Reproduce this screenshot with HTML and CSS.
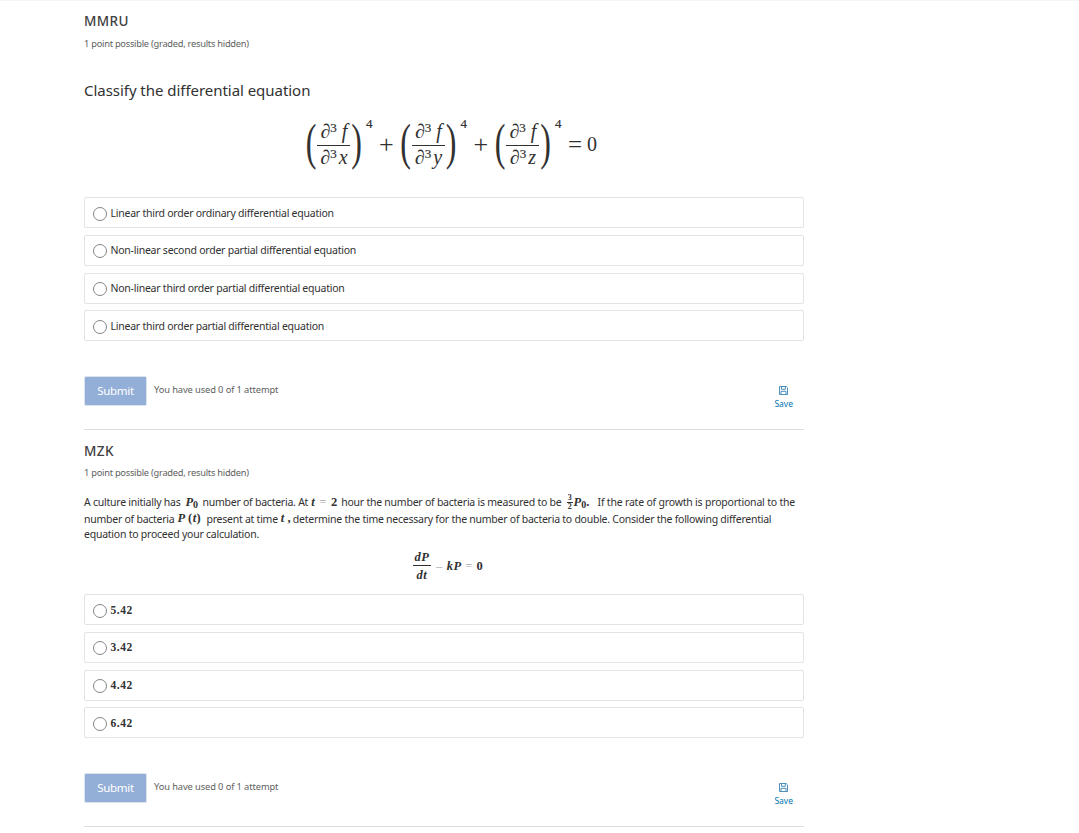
FILE: index.html
```html
<!DOCTYPE html>
<html lang="en">
<head>
    <meta charset="UTF-8">
    <meta name="viewport" content="width=device-width, initial-scale=1.0">
    <title>Differential Equations Quiz</title>
    <link rel="stylesheet" href="styles.css">
</head>
<body>
    <div class="problems">
        <section class="problem">
            <h3 class="problem-title">MMRU</h3>
            <div class="problem-progress">1 point possible (graded, results hidden)</div>
            <p class="question">Classify the differential equation</p>

            <div class="equation equation-large">
                <span class="paren">(</span>
                <span class="frac"><span class="num">∂<sup>3</sup><i class="f">f</i></span><span class="den">∂<sup>3</sup><i class="var">x</i></span></span>
                <span class="paren">)</span>
                <span class="power">4</span>
                <span class="plus">+</span>
                <span class="paren">(</span>
                <span class="frac"><span class="num">∂<sup>3</sup><i class="f">f</i></span><span class="den">∂<sup>3</sup><i class="var">y</i></span></span>
                <span class="paren">)</span>
                <span class="power">4</span>
                <span class="plus">+</span>
                <span class="paren">(</span>
                <span class="frac"><span class="num">∂<sup>3</sup><i class="f">f</i></span><span class="den">∂<sup>3</sup><i class="var">z</i></span></span>
                <span class="paren">)</span>
                <span class="power">4</span>
                <span class="equals">=</span>
                <span class="zero">0</span>
            </div>

            <div class="choices">
                <label class="choice"><input type="radio" name="mmru"><span class="choice-text">Linear third order ordinary differential equation</span></label>
                <label class="choice"><input type="radio" name="mmru"><span class="choice-text">Non-linear second order partial differential equation</span></label>
                <label class="choice"><input type="radio" name="mmru"><span class="choice-text">Non-linear third order partial differential equation</span></label>
                <label class="choice"><input type="radio" name="mmru"><span class="choice-text">Linear third order partial differential equation</span></label>
            </div>

            <div class="action">
                <button class="submit" type="button">Submit</button>
                <span class="attempts">You have used 0 of 1 attempt</span>
                <a class="save">
                    <svg class="save-icon" viewBox="0 0 9 9"><path d="M.5.5h6.7l1.3 1.3v6.7h-8zM2.5.5v2.8h3.8V.5M2 8.5V5.3h5v3.2"/></svg>
                    <span>Save</span>
                </a>
            </div>
        </section>

        <section class="problem">
            <h3 class="problem-title">MZK</h3>
            <div class="problem-progress">1 point possible (graded, results hidden)</div>
            <div class="passage">
                <div class="line line-1"><span>A culture initially has</span><span class="math p-zero"><i>P</i><sub>0</sub></span><span>number of bacteria. At</span><span class="math t-two"><i>t</i> <span class="op">=</span> 2</span><span>hour the number of bacteria is measured to be</span><span class="small-frac"><span>3</span><span>2</span></span><span class="math p-zero-end"><i>P</i><sub>0</sub>.</span><span class="rate">If the rate of growth is proportional to the</span></div>
                <div class="line line-2"><span>number of bacteria</span><span class="math p-of-t"><i>P</i> (<i>t</i>)</span><span>present at time</span><span class="math t-comma"><i>t</i> ,</span><span>determine the time necessary for the number of bacteria to double. Consider the following differential</span></div>
                <div class="line">equation to proceed your calculation.</div>
            </div>

            <div class="equation equation-small">
                <span class="frac"><span class="num"><i>dP</i></span><span class="den"><i>dt</i></span></span>
                <span class="op">–</span>
                <span class="kp"><i>kP</i></span>
                <span class="op">=</span>
                <span class="zero">0</span>
            </div>

            <div class="choices">
                <label class="choice"><input type="radio" name="mzk"><span class="choice-number">5.42</span></label>
                <label class="choice"><input type="radio" name="mzk"><span class="choice-number">3.42</span></label>
                <label class="choice"><input type="radio" name="mzk"><span class="choice-number">4.42</span></label>
                <label class="choice"><input type="radio" name="mzk"><span class="choice-number">6.42</span></label>
            </div>

            <div class="action">
                <button class="submit" type="button">Submit</button>
                <span class="attempts">You have used 0 of 1 attempt</span>
                <a class="save">
                    <svg class="save-icon" viewBox="0 0 9 9"><path d="M.5.5h6.7l1.3 1.3v6.7h-8zM2.5.5v2.8h3.8V.5M2 8.5V5.3h5v3.2"/></svg>
                    <span>Save</span>
                </a>
            </div>
        </section>
    </div>
</body>
</html>
```
FILE: styles.css
```css
* {
    margin: 0;
    padding: 0;
    box-sizing: border-box;
}

body {
    font-family: "Noto Sans", "Open Sans", sans-serif;
    font-size: 10.5px;
    color: #313131;
    background: #fff;
    border-top: 1px solid #f5f5f5;
    overflow: hidden;
}

.problems {
    width: 720px;
    margin-left: 84px;
}

.problem {
    border-bottom: 1px solid #ddd;
    padding-top: 10px;
    height: 429px;
}

.problem + .problem {
    padding-top: 11px;
    height: 397px;
}

.problem-title {
    font-size: 13.5px;
    font-weight: 500;
    line-height: 20px;
    letter-spacing: 0.4px;
    color: #414141;
}

.problem-progress {
    margin-top: 5px;
    font-size: 9.3px;
    line-height: 16px;
    letter-spacing: -0.26px;
    color: #5e5e5e;
    white-space: nowrap;
}

.problem + .problem .problem-progress {
    margin-top: 4px;
}

.question {
    margin-top: 26px;
    font-size: 15px;
    line-height: 24px;
    letter-spacing: -0.04px;
    white-space: nowrap;
}

/* Equations */
.equation {
    display: flex;
    justify-content: center;
    align-items: center;
    font-family: "Liberation Serif", serif;
    white-space: nowrap;
}

.frac {
    display: flex;
    flex-direction: column;
    text-align: center;
}

.frac .num {
    border-bottom: 1px solid #313131;
}

.equation-large {
    height: 50px;
    margin-top: 17px;
    padding-left: 14px;
    font-size: 20px;
}

.equation-large .frac {
    width: 33px;
}

.equation-large .num {
    height: 27px;
    line-height: 24px;
}

.equation-large .den {
    height: 23px;
    line-height: 23px;
}

.equation-large sup {
    font-size: 13px;
    line-height: 0;
    vertical-align: 6px;
    -webkit-text-stroke: 0.2px;
}

.equation-large .f {
    margin-left: 5px;
}

.equation-large .var {
    margin-left: 2px;
}

/* Tall thin delimiters */
.paren {
    display: flex;
    justify-content: center;
    width: 12.5px;
    margin-bottom: 5px;
    font-size: 32px;
    line-height: 32px;
    transform: scaleY(1.55);
}

.power {
    align-self: flex-start;
    width: 8px;
    margin-left: 3px;
    font-size: 13px;
    line-height: 9px;
    -webkit-text-stroke: 0.2px;
}

.plus {
    width: 13px;
    margin: 2px 7.5px 0 5px;
    font-size: 26px;
    line-height: 24px;
}

.equals {
    margin: 1px 0 0 5px;
    font-size: 25px;
    line-height: 24px;
}

.equation-large .zero {
    margin-left: 5px;
}

.equation-small {
    height: 34px;
    margin-top: 7px;
    padding-left: 8px;
    font-size: 12.5px;
    font-weight: bold;
    letter-spacing: 0.4px;
}

.equation-small .frac {
    width: 18px;
    margin-right: 4px;
}

.equation-small .num,
.equation-small .den {
    height: 17px;
    line-height: 16px;
}

.equation-small .den {
    line-height: 18px;
}

.op {
    color: #aaa;
    font-weight: normal;
}

.equation-small .op {
    width: 9px;
    text-align: center;
}

.kp {
    margin: 0 3px;
}

.equation-small .zero {
    margin-left: 3px;
}

/* Answer choices */
.choices {
    display: grid;
    gap: 6.75px;
    margin-top: 28px;
}

.problem + .problem .choices {
    margin-top: 11px;
}

.choice {
    display: flex;
    align-items: center;
    height: 31px;
    padding-left: 8px;
    border: 1px solid #e3e3e3;
    border-radius: 2px;
}

.choice input {
    appearance: none;
    width: 14px;
    height: 14px;
    margin: 2px 3.5px 0 0;
    border: 1px solid #858585;
    border-radius: 50%;
}

.choice-text {
    letter-spacing: -0.24px;
    white-space: nowrap;
}

.choice-number {
    font-family: "Liberation Serif", serif;
    font-size: 11.5px;
    font-weight: bold;
    letter-spacing: 0.5px;
}

/* Submit row */
.action {
    display: flex;
    align-items: flex-start;
    margin-top: 35px;
}

.submit {
    width: 63px;
    height: 30px;
    padding-bottom: 1px;
    border: 1px solid #dbe3ef;
    border-radius: 2px;
    background: #93aed7;
    color: #fff;
    font-family: inherit;
    font-size: 11.5px;
    letter-spacing: -0.3px;
}

.attempts {
    margin: 6px 0 0 7px;
    font-size: 9.3px;
    line-height: 16px;
    letter-spacing: -0.1px;
    color: #5e5e5e;
}

.save {
    display: flex;
    flex-direction: column;
    align-items: center;
    margin: 10px 11px 0 auto;
    font-size: 8.5px;
    line-height: 13px;
    color: #0075b4;
}

.save-icon {
    width: 9px;
    height: 9px;
    margin-bottom: 2px;
    fill: none;
    stroke: #4d8fbd;
}

/* Question text with inline math */
.passage {
    margin-top: 12px;
    letter-spacing: -0.24px;
    white-space: nowrap;
}

.line {
    display: flex;
    align-items: center;
    height: 16px;
}

.line-1 {
    height: 18px;
}

.line-2 {
    height: 15px;
    letter-spacing: -0.25px;
}

.math {
    font-family: "Liberation Serif", serif;
    font-size: 12.5px;
    font-weight: bold;
    letter-spacing: 0;
}

.math sub {
    font-size: 10px;
    line-height: 0;
    vertical-align: -2px;
}

.p-zero {
    width: 22px;
    padding-left: 5px;
}

.t-two {
    width: 33px;
    padding-left: 3px;
    word-spacing: 1.5px;
}

.p-zero-end {
    width: 25px;
    padding-left: 1px;
}

.p-of-t {
    width: 32px;
    padding-left: 3px;
    word-spacing: -1px;
    letter-spacing: 0.4px;
}

.t-comma {
    width: 15px;
    padding-left: 3px;
}

.rate {
    letter-spacing: -0.2px;
}

.small-frac {
    display: flex;
    flex-direction: column;
    width: 6px;
    margin-left: 5px;
    font: bold 8px/8px "Liberation Serif", serif;
    text-align: center;
}

.small-frac span:first-child {
    border-bottom: 1px solid #313131;
}
```
